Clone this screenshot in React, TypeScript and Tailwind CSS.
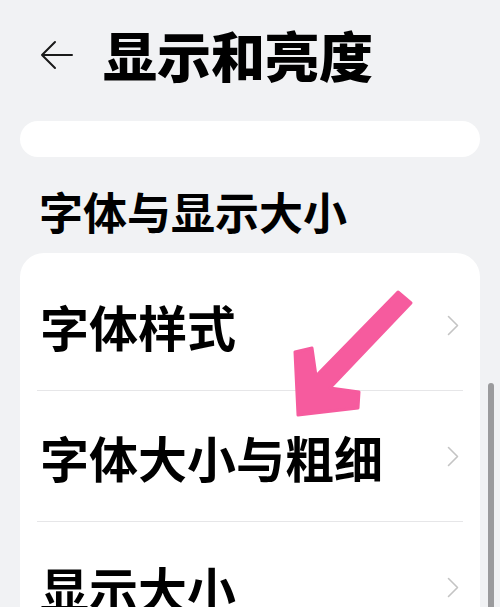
import React from 'react';

const font = { fontFamily: '"Noto Sans CJK SC", "Noto Sans", sans-serif' };

const Chevron = () => (
  <svg width="12" height="21" viewBox="0 0 12 21" fill="none" className="shrink-0">
    <path d="M1.5 1.5 L10.5 10.5 L1.5 19.5" stroke="#c4c4c4" strokeWidth="1.6" strokeLinecap="round" strokeLinejoin="round" />
  </svg>
);

const Row: React.FC<{ label: string; last?: boolean }> = ({ label, last }) => (
  <div>
    <div className="flex items-center justify-between h-[130px] pl-[20px] pr-[21px]">
      <span className="text-[49px] font-bold leading-none text-black">{label}</span>
      <Chevron />
    </div>
    {!last && <div className="mx-[17px] h-px bg-[#e6e6e8]" />}
  </div>
);

export default function App() {
  return (
    <div className="relative w-[500px] h-[607px] overflow-hidden bg-[#f1f2f4]" style={font}>
      <div className="flex items-center h-[94px] pl-[40px] pt-[16px]">
        <svg width="33" height="30" viewBox="0 0 33 30" fill="none" className="shrink-0">
          <path d="M32 15 H2 M15 2 L2 15 L15 28" stroke="#1a1a1a" strokeWidth="2" strokeLinecap="round" strokeLinejoin="round" />
        </svg>
        <h1 className="ml-[30px] text-[54px] font-black leading-none text-black">显示和亮度</h1>
      </div>

      <div className="mx-[20px] mt-[27px] h-[36px] rounded-full bg-white" />

      <h2 className="px-[39px] mt-[32px] text-[44px] font-bold leading-none text-black">字体与显示大小</h2>

      <div className="mx-[20px] mt-[20px] rounded-t-[24px] bg-white pt-[7px]">
        <Row label="字体样式" />
        <Row label="字体大小与粗细" />
        <Row label="显示大小" last />
      </div>

      <svg className="absolute left-0 top-0" width="500" height="607" viewBox="0 0 500 607" fill="none">
        <polygon
          points="398,292 411,303 330,388 359,392 358,408 298,415 295,352 312,348 316,376"
          fill="#f65b9e"
          stroke="#f65b9e"
          strokeWidth="3"
          strokeLinejoin="round"
        />
      </svg>

      <div className="absolute left-[488px] top-[383px] w-[6px] h-[240px] rounded-full bg-[#9b9b9d]" />
    </div>
  );
}
